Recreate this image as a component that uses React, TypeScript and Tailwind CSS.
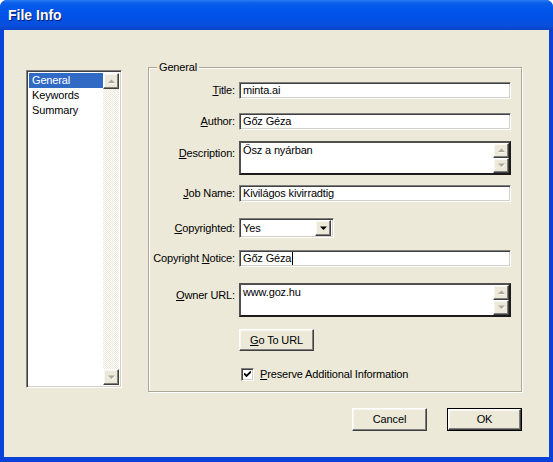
import type { ReactNode } from "react";

const raised =
  "border border-t-white border-l-white border-b-[#404040] border-r-[#404040] shadow-[inset_-1px_-1px_0_#808080,inset_1px_1px_0_#f8f7f2] bg-[#ece9d8]";
const sunken =
  "border border-t-[#808080] border-l-[#808080] border-b-white border-r-white shadow-[inset_1px_1px_0_#404040,inset_-1px_-1px_0_#d4d0c8] bg-white";

function Arrow({ up, disabled }: { up?: boolean; disabled?: boolean }) {
  const pts = up ? "0,4 3.5,0.5 7,4" : "0,0.5 3.5,4 7,0.5";
  return (
    <svg width="7" height="5" viewBox="0 0 7 5" className="block">
      {disabled ? (
        <polygon points={pts} fill="#ffffff" transform="translate(0.8,0.8)" />
      ) : null}
      <polygon points={pts} fill={disabled ? "#aca899" : "#000000"} />
    </svg>
  );
}

function ScrollButton({ up, disabled = true }: { up?: boolean; disabled?: boolean }) {
  return (
    <div className={`flex h-[16px] w-[16px] items-center justify-center ${raised}`}>
      <Arrow up={up} disabled={disabled} />
    </div>
  );
}

function U({ children }: { children: ReactNode }) {
  return <span className="underline underline-offset-[1px]">{children}</span>;
}

function Row({
  label,
  top,
  tall,
  children,
}: {
  label: ReactNode;
  top: number;
  tall?: boolean;
  children: ReactNode;
}) {
  return (
    <div
      className={`flex gap-[4px] ${tall ? "items-start" : "items-center"}`}
      style={{ marginTop: top }}
    >
      <div className={`w-[86px] shrink-0 text-right ${tall ? "pt-[4px]" : ""}`}>{label}</div>
      {children}
    </div>
  );
}

function TextField({ value, caret }: { value: string; caret?: boolean }) {
  return (
    <div className={`relative flex h-[17px] w-[272px] items-center px-[3px] ${sunken}`}>
      <span className="leading-[13px]">{value}</span>
      {caret ? <span className="ml-[1px] h-[13px] w-[1px] bg-black" /> : null}
    </div>
  );
}

function TextArea({ value }: { value: string }) {
  return (
    <div className="flex h-[34px] w-[272px] border-2 border-[#1c1c1c] border-t-[#505050] border-l-[#505050] bg-white">
      <div className="flex-1 px-[2px] pt-[1px] leading-[13px]">{value}</div>
      <div className="flex flex-col">
        <ScrollButton up />
        <ScrollButton />
      </div>
    </div>
  );
}

export default function App() {
  return (
    <div className="flex h-[462px] w-[553px] flex-col overflow-hidden rounded-t-[7px] bg-[#0842d8] font-['Liberation_Sans',Arial,sans-serif] text-[11px] tracking-[-0.15px] text-black">
      <div className="flex h-[30px] shrink-0 items-center bg-[linear-gradient(180deg,#2a7bf5_0%,#0a5ee8_10%,#0256ea_30%,#0050e6_60%,#0a4fdb_85%,#0a43c8_100%)] pl-[8px] pt-[1px]">
        <span className="text-[14px] font-bold tracking-[0px] text-white [text-shadow:1px_1px_0_#0a1a6a]">File Info</span>
      </div>

      <div className="mx-[4px] mb-[5px] flex flex-1 flex-col bg-[#ece9d8]">
        <div className="flex pl-[22px] pt-[37px]">
          {/* list box */}
          <div className={`mt-[3px] flex h-[318px] w-[96px] p-[2px] ${sunken}`}>
            <div className="flex-1">
              <div className="bg-[#316ac5] pl-[3px] leading-[15px] text-white">General</div>
              <div className="pl-[3px] leading-[15px]">Keywords</div>
              <div className="pl-[3px] leading-[15px]">Summary</div>
            </div>
            <div className="flex w-[16px] flex-col justify-between bg-[repeating-conic-gradient(#ffffff_0%_25%,#ece9d8_0%_50%)] bg-[length:2px_2px]">
              <ScrollButton up />
              <ScrollButton />
            </div>
          </div>

          {/* group box */}
          <div className="relative ml-[26px] flex h-[325px] w-[374px] flex-col border border-[#aca899] shadow-[inset_1px_1px_0_#ffffff,1px_1px_0_#ffffff]">
            <span className="absolute left-[8px] top-[-8px] bg-[#ece9d8] px-[2px] leading-[14px]">General</span>

            <Row label={<><U>T</U>itle:</>} top={14}>
              <TextField value="minta.ai" />
            </Row>
            <Row label={<><U>A</U>uthor:</>} top={14}>
              <TextField value="Gőz Géza" />
            </Row>
            <Row label={<><U>D</U>escription:</>} top={11} tall>
              <TextArea value="Ősz a nyárban" />
            </Row>
            <Row label={<><U>J</U>ob Name:</>} top={10}>
              <TextField value="Kivilágos kivirradtig" />
            </Row>
            <Row label={<><U>C</U>opyrighted:</>} top={16}>
              <div className={`flex h-[20px] w-[95px] items-center pl-[3px] pr-[2px] ${sunken}`}>
                <span className="flex-1 leading-[13px]">Yes</span>
                <div className={`flex h-[16px] w-[16px] items-center justify-center ${raised}`}>
                  <Arrow />
                </div>
              </div>
            </Row>
            <Row label={<>Copyright <U>N</U>otice:</>} top={12}>
              <TextField value="Gőz Géza" caret />
            </Row>
            <Row label={<><U>O</U>wner URL:</>} top={16} tall>
              <TextArea value="www.goz.hu" />
            </Row>

            <div className="ml-[90px] mt-[12px]">
              <button className={`h-[22px] w-[75px] leading-[13px] ${raised}`}>
                <U>G</U>o To URL
              </button>
            </div>

            <div className="ml-[92px] mt-[17px] flex items-center gap-[6px]">
              <div className={`flex h-[13px] w-[13px] items-center justify-center ${sunken}`}>
                <svg width="7" height="7" viewBox="0 0 7 7" className="block">
                  <path d="M0 2.5 L2.5 5 L7 0.5" stroke="#000" strokeWidth="1.8" fill="none" />
                </svg>
              </div>
              <span className="leading-[13px]">
                <U>P</U>reserve Additional Information
              </span>
            </div>
          </div>
        </div>

        <div className="mt-[16px] flex justify-end gap-[20px] pr-[27px]">
          <button className={`h-[23px] w-[75px] leading-[13px] ${raised}`}>Cancel</button>
          <div className="border border-black">
            <button className={`block h-[21px] w-[73px] leading-[13px] ${raised}`}>OK</button>
          </div>
        </div>
      </div>
    </div>
  );
}
